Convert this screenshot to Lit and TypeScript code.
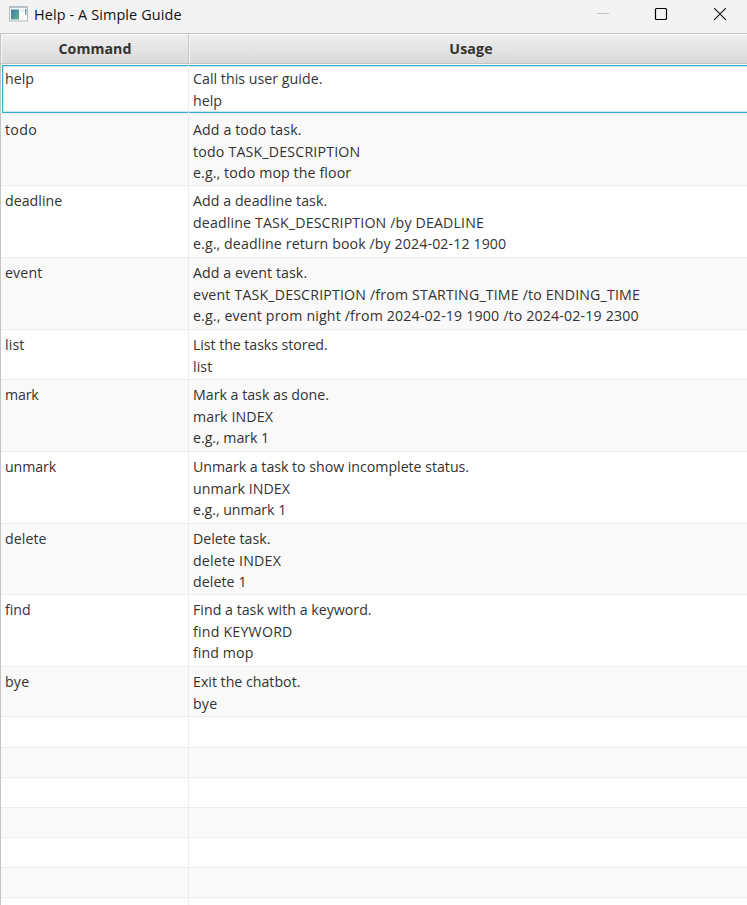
import { LitElement, html, css } from "lit";
import { customElement } from "lit/decorators.js";

type Line = [string, number];
interface Row { name: Line; lines: Line[]; height: number; pad: number; }

const ctx = document.createElement("canvas").getContext("2d")!;
const spacing = (text: string, width: number, font: string) => {
  ctx.font = font;
  return (width - ctx.measureText(text).width) / text.length;
};

const BODY = '14.2px "Open Sans"';
const TITLE = '14.4px "Open Sans"';
const HEAD = 'bold 14.2px "Open Sans"';

const ROWS: Row[] = [
  { name: ["help", 29], lines: [["Call this user guide.", 129.4], ["help", 29]], height: 50, pad: 4 },
  { name: ["todo", 32], lines: [["Add a todo task.", 108.6], ["todo TASK_DESCRIPTION", 167.4], ["e.g., todo mop the floor", 158.2]], height: 72, pad: 5 },
  { name: ["deadline", 57.2], lines: [["Add a deadline task.", 134.2], ["deadline TASK_DESCRIPTION /by DEADLINE", 291], ["e.g., deadline return book /by 2024-02-12 1900", 313.3]], height: 72, pad: 4 },
  { name: ["event", 37.4], lines: [["Add a event task.", 114.2], ["event TASK_DESCRIPTION /from STARTING_TIME /to ENDING_TIME", 447], ["e.g., event prom night /from 2024-02-19 1900 /to 2024-02-19 2300", 445.7]], height: 72, pad: 4 },
  { name: ["list", 19.5], lines: [["List the tasks stored.", 134.6], ["list", 19.3]], height: 50, pad: 4 },
  { name: ["mark", 33.6], lines: [["Mark a task as done.", 136], ["mark INDEX", 80], ["e.g., mark 1", 76.2]], height: 72, pad: 4 },
  { name: ["unmark", 51], lines: [["Unmark a task to show incomplete status.", 276], ["unmark INDEX", 97], ["e.g., unmark 1", 93.2]], height: 72, pad: 4 },
  { name: ["delete", 41.6], lines: [["Delete task.", 77.4], ["delete INDEX", 88], ["delete 1", 53.6]], height: 71, pad: 4 },
  { name: ["find", 25.7], lines: [["Find a task with a keyword.", 178.6], ["find KEYWORD", 99.6], ["find mop", 60.4]], height: 72, pad: 4 },
  { name: ["bye", 24.3], lines: [["Exit the chatbot.", 107.4], ["bye", 24.3]], height: 50, pad: 4 },
];
const EMPTY = [31, 30, 30, 30, 30, 30, 30];

@customElement("app-root")
export class AppRoot extends LitElement {
  static styles = css`
    :host { display: block; width: 747px; height: 905px; overflow: hidden; background: #fff;
      font-family: "Open Sans", "Noto Sans", sans-serif; color: #333; box-sizing: border-box; }
    .window { display: flex; flex-direction: column; height: 905px; }
    .title { height: 33px; flex: none; display: flex; align-items: center; background: #f3f3f3; color: #111; }
    .logo { margin: 0 6px 5px 9px; flex: none; }
    .caption { font-size: 14.4px; line-height: 30px; height: 33px; white-space: nowrap; flex: 1; }
    .controls { flex: none; margin-right: 20px; height: 33px; }
    .table { flex: 1; border-left: 1px solid #c4c4c4; border-top: 1px solid #c4c4c4; overflow: hidden; min-height: 0; }
    .head { display: grid; grid-template-columns: 188px 1fr; height: 30px; box-sizing: border-box;
      border-bottom: 1px solid #c4c4c4; }
    .th { text-align: center; font-weight: 700; font-size: 14.2px; line-height: 27px;
      border-top: 1px solid #fcfcfc; border-left: 1px solid #f6f6f6; background: linear-gradient(#efefef, #d9d9d9); }
    .th + .th { padding-left: 5px; }
    .th:first-child { border-right: 1px solid #c4c4c4; }
    .row { position: relative; display: grid; grid-template-columns: 188px 1fr; box-sizing: border-box; border-bottom: 1px solid #ededed; background: #fff; }
    .row.odd { background: #f9f9f9; }
    .cell { position: relative; padding-left: 4px; font-size: 14.2px; line-height: 21.5px; white-space: pre; }
    .cell:first-child { border-right: 1px solid #ededed; }
    .row.focus::before { content: ""; position: absolute; left: 1px; right: -4px; top: 1px; bottom: 0; border: 1px solid #39a9d0; box-shadow: inset 0 0 0 1px #c5e8f4; }
  `;

  private text([value, width]: Line, font = BODY) {
    return html`<span style="letter-spacing:${spacing(value, width, font)}px">${value}</span>`;
  }

  render() {
    return html`<div class="window">
      <div class="title">
        <svg class="logo" width="19" height="16" viewBox="0 0 19 16">
          <defs><linearGradient id="g" x1="0" y1="0" x2="1" y2="1"><stop stop-color="#3f78a8"/><stop offset="1" stop-color="#65b28a"/></linearGradient>
          <linearGradient id="h" x1="0" y1="0" x2="0" y2="1"><stop stop-color="#4f86a8"/><stop offset="1" stop-color="#86cf9a"/></linearGradient></defs>
          <rect x=".5" y="1" width="18" height="14" fill="#f8fafb" stroke="#b4babd"/>
          <path d="M0 1h19" stroke="#9eabb3"/>
          <rect x="2" y="3.5" width="8" height="10" fill="url(#g)"/>
          <rect x="12" y="3" width="3" height="3" fill="#e3ebf3"/>
          <rect x="16" y="3" width="1.5" height="6" fill="url(#h)"/>
        </svg>
        <div class="caption">${this.text(["Help - A Simple Guide", 147.6], TITLE)}</div>
        <svg class="controls" width="130" height="33" viewBox="597 0 130 33">
          <path d="M597 13.5h12" stroke="#c2c2c2"/>
          <rect x="655.5" y="8.5" width="11" height="11" rx="1" fill="none" stroke="#000" stroke-width="1.2"/>
          <path d="M714.2 8.2l11.6 11.6M725.8 8.2l-11.6 11.6" stroke="#111" stroke-width="1.1"/>
        </svg>
      </div>
      <div class="table">
        <div class="head">
          <div class="th">${this.text(["Command", 73], HEAD)}</div>
          <div class="th">${this.text(["Usage", 43.4], HEAD)}</div>
        </div>
        ${ROWS.map((r, i) => html`<div class="row ${i % 2 ? "odd" : ""} ${i === 0 ? "focus" : ""}" style="height:${r.height}px">
          <div class="cell" style="padding-top:${r.pad}px">${this.text(r.name)}</div>
          <div class="cell" style="padding-top:${r.pad}px">${r.lines.map((l) => html`<div>${this.text(l)}</div>`)}</div>
        </div>`)}
        ${EMPTY.map((h, i) => html`<div class="row ${i % 2 ? "odd" : ""}" style="height:${h}px"><div class="cell"></div><div class="cell"></div></div>`)}
      </div>
    </div>`;
  }
}
